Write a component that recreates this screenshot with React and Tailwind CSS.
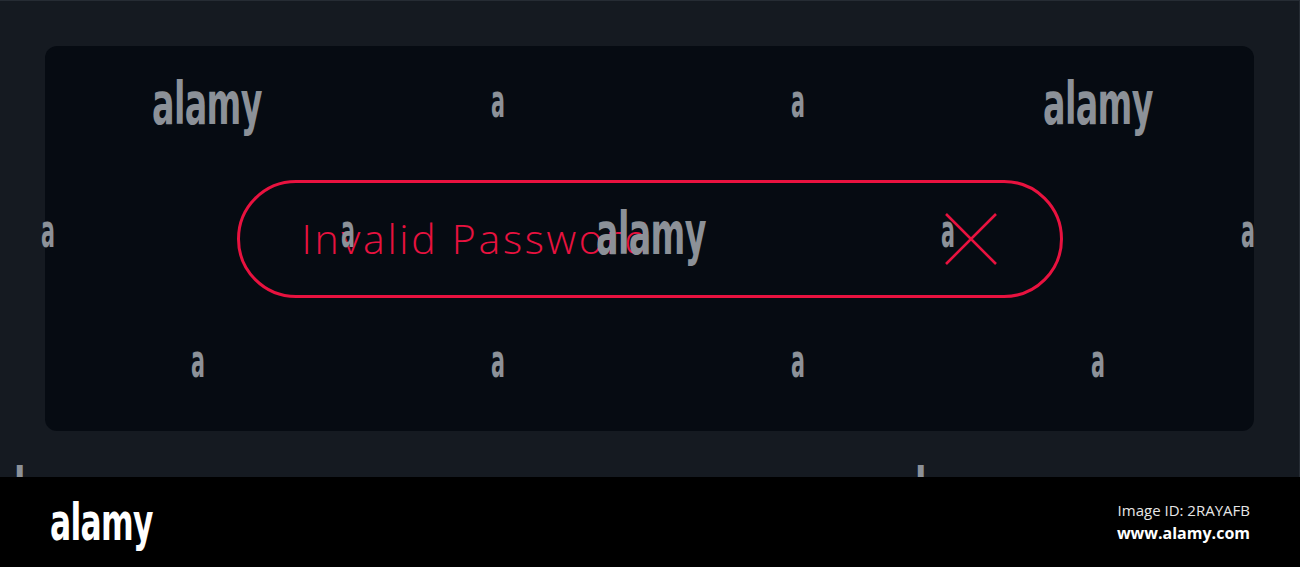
const marks = [
  { left: 152, top: 75, big: true },
  { left: 1043, top: 75, big: true },
  { left: 596, top: 205, big: true },
  { left: 491, top: 78 },
  { left: 791, top: 78 },
  { left: 41, top: 208 },
  { left: 341, top: 208 },
  { left: 941, top: 208 },
  { left: 1241, top: 208 },
  { left: 191, top: 338 },
  { left: 491, top: 338 },
  { left: 791, top: 338 },
  { left: 1091, top: 338 },
  { left: -8, top: 461, big: true },
  { left: 893, top: 461, big: true },
];

const wmFont = '"DejaVu Sans Condensed", "DejaVu Sans", sans-serif';

function Watermark({ left, top, big }) {
  return (
    <span
      className={`pointer-events-none absolute origin-left whitespace-nowrap font-bold leading-none tracking-[-1px] text-[#8c9198] ${
        big ? "scale-x-[0.64]" : "scale-x-[0.5]"
      }`}
      style={{ left, top, fontFamily: wmFont, fontSize: big ? 58 : 46 }}
    >
      {big ? "alamy" : "a"}
    </span>
  );
}

export default function App() {
  return (
    <div className="relative h-[567px] w-[1300px] overflow-hidden bg-black">
      <div className="h-[477px] border-t border-r border-[#262c34] bg-[#151a21] p-[45px]">
        <div className="flex h-[385px] items-center justify-center rounded-xl bg-[#060b12]">
          <div className="flex h-[118px] w-[826px] items-center justify-between rounded-full border-[3px] border-[#e8123f] pl-[62px] pr-[63px]">
            <span
              className="text-[41px] font-light tracking-[2.7px] text-[#e8123f]"
              style={{ fontFamily: '"Open Sans", sans-serif' }}
            >
              Invalid Password
            </span>
            <svg width="52" height="52" viewBox="0 0 52 52" className="text-[#e8123f]">
              <path d="M1 1 L51 51 M51 1 L1 51" stroke="currentColor" strokeWidth="2.6" fill="none" />
            </svg>
          </div>
        </div>
      </div>

      {marks.map((m, i) => (
        <Watermark key={i} {...m} />
      ))}

      <div className="relative z-10 flex h-[90px] items-center justify-between bg-black pl-[50px] pr-[50px]">
        <span
          className="origin-left scale-x-[0.67] font-bold leading-none tracking-[-1px] text-white"
          style={{ fontFamily: wmFont, fontSize: 52 }}
        >
          alamy
        </span>
        <div className="flex flex-col items-end gap-[4px] text-white" style={{ fontFamily: '"Open Sans", sans-serif' }}>
          <span className="text-[15px] leading-[19px] text-[#e6e6e6]">Image ID: 2RAYAFB</span>
          <span className="text-[16px] font-bold leading-[19px]">www.alamy.com</span>
        </div>
      </div>
    </div>
  );
}
